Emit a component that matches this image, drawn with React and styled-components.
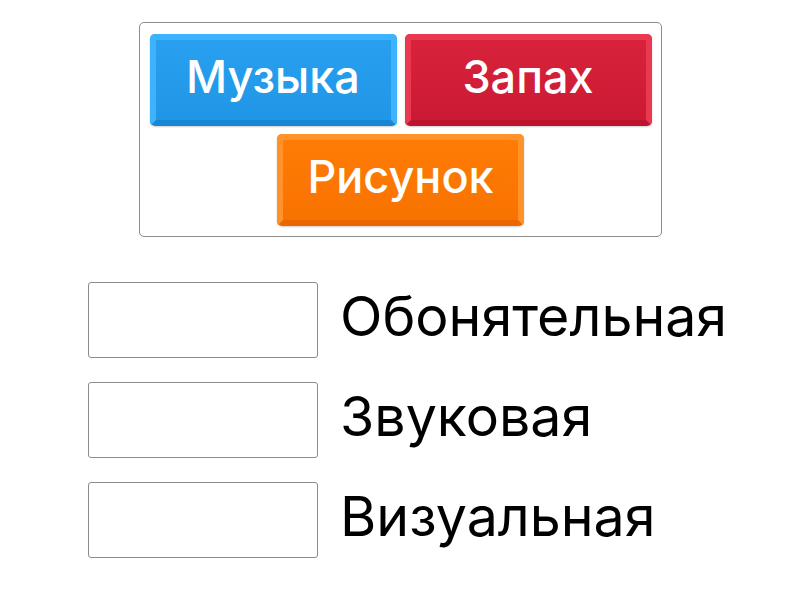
import React from 'react'
import styled, { createGlobalStyle } from 'styled-components'

const GlobalStyle = createGlobalStyle`
  body {
    margin: 0;
    background: #fff;
    font-family: Inter, Roboto, "Liberation Sans", sans-serif;
  }
`

const palette = {
  blue: { rim: '#3db3fd', face: '#28a0ef', low: '#1886d6', shade: '#2196e6' },
  red: { rim: '#ea3850', face: '#d8223b', low: '#bd1330', shade: '#cc1a34' },
  orange: { rim: '#ff9228', face: '#ff7c06', low: '#ec6600', shade: '#f87200' },
}

const Page = styled.div`
  width: 800px;
  height: 600px;
  padding-top: 22px;
  box-sizing: border-box;
  display: flex;
  flex-direction: column;
`

const Tray = styled.div`
  align-self: center;
  width: 523px;
  box-sizing: border-box;
  padding: 11px 9px 10px 10px;
  border: 1px solid #8c8c8c;
  border-radius: 5px;
  display: flex;
  flex-wrap: wrap;
  justify-content: center;
  gap: 8px;
`

const Tile = styled.div`
  width: 247px;
  height: 92px;
  box-sizing: border-box;
  border: 6px solid ${({ $c }) => palette[$c].rim};
  border-bottom-color: ${({ $c }) => palette[$c].low};
  border-radius: 5px;
  background: linear-gradient(
    to bottom,
    ${({ $c }) => palette[$c].face},
    ${({ $c }) => palette[$c].shade}
  );
  box-shadow: 0 1px 2px rgba(0, 0, 0, 0.2);
  color: #fff;
  font-size: 45px;
  font-weight: 500;
  line-height: 1;
  display: flex;
  align-items: center;
  justify-content: center;
  padding-bottom: 8px;
`

const Rows = styled.div`
  margin-top: 45px;
  padding-left: 88px;
  display: flex;
  flex-direction: column;
  gap: 24px;
`

const Row = styled.div`
  display: flex;
  align-items: center;
  gap: 22px;
`

const Slot = styled.div`
  width: 230px;
  height: 76px;
  box-sizing: border-box;
  border: 1px solid #8c8c8c;
  border-radius: 3px;
`

const Label = styled.div`
  font-size: 55.5px;
  color: #000;
  line-height: 1;
  margin-top: -8px;
`

const tiles = [
  { text: 'Музыка', color: 'blue' },
  { text: 'Запах', color: 'red' },
  { text: 'Рисунок', color: 'orange' },
]

const labels = ['Обонятельная', 'Звуковая', 'Визуальная']

export default function App() {
  return (
    <>
      <GlobalStyle />
      <Page>
        <Tray>
          {tiles.map((t) => (
            <Tile key={t.text} $c={t.color}>
              {t.text}
            </Tile>
          ))}
        </Tray>
        <Rows>
          {labels.map((l) => (
            <Row key={l}>
              <Slot />
              <Label>{l}</Label>
            </Row>
          ))}
        </Rows>
      </Page>
    </>
  )
}
